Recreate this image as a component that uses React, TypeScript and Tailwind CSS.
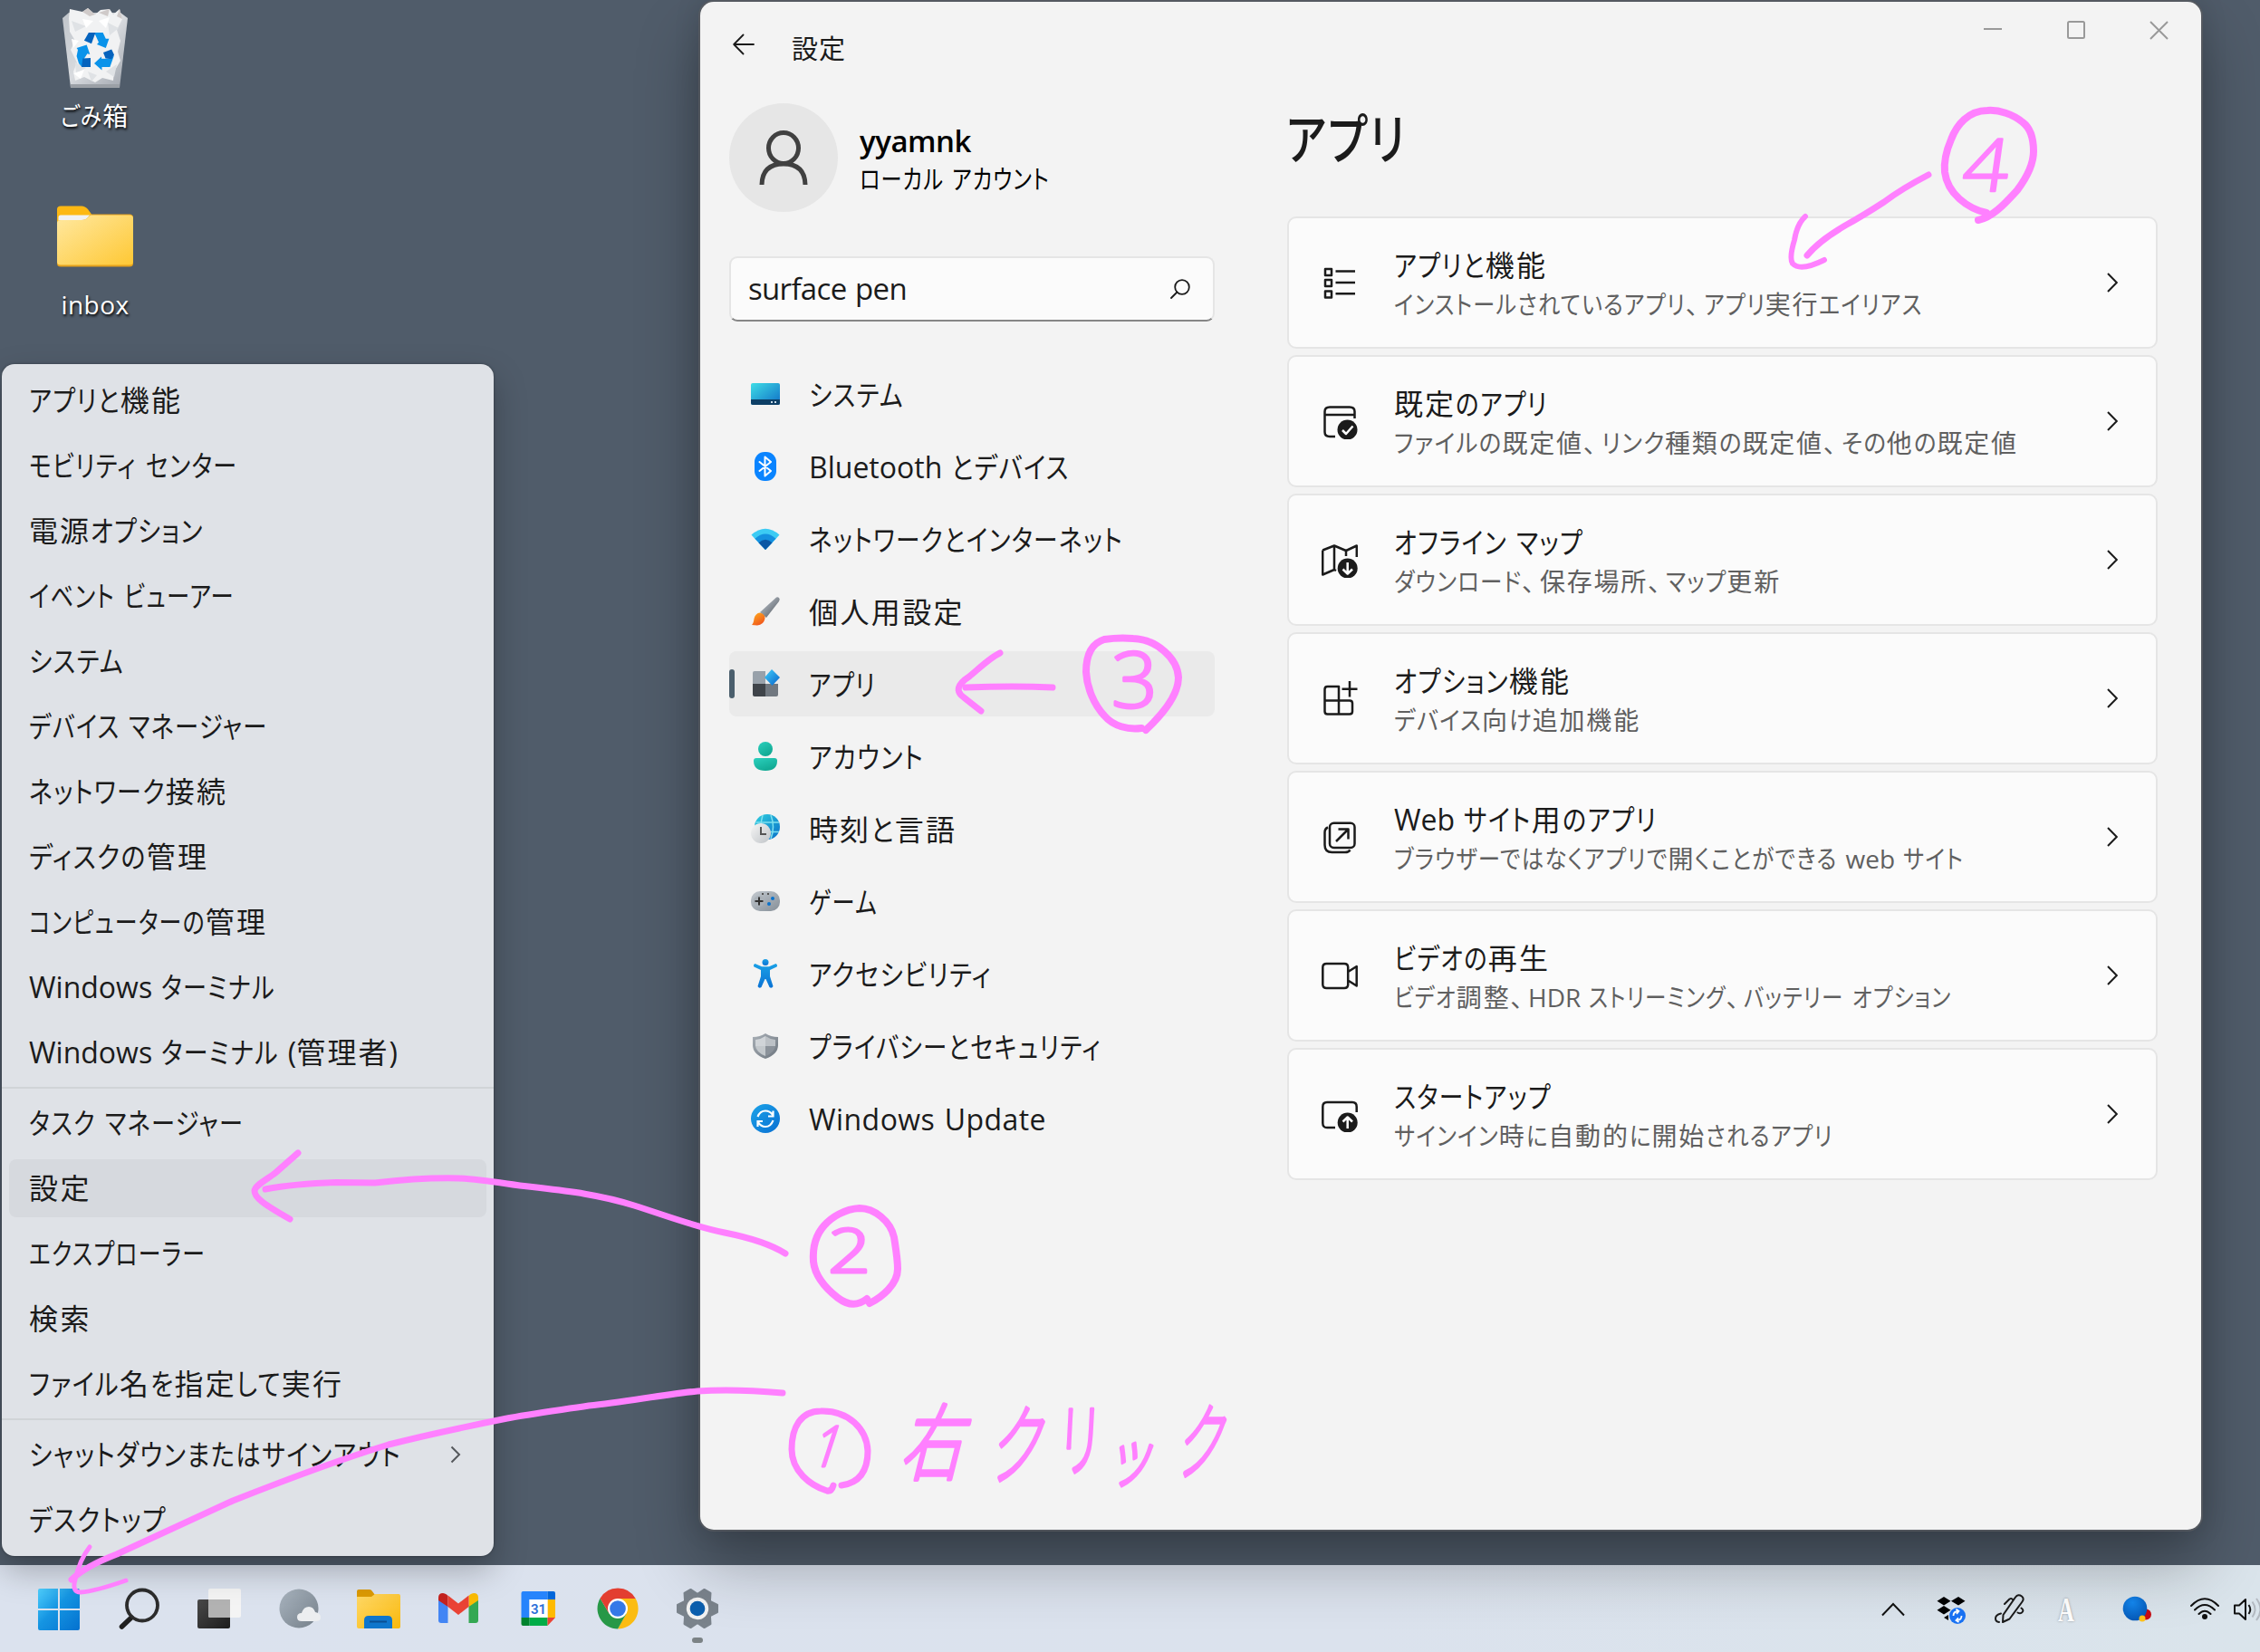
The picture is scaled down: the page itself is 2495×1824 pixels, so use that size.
import React, { useLayoutEffect, useRef, useState } from "react";

const KANJI = /[一-龯々]/;
const KANA = /[ぁ-ゖァ-ヺー]/;

/*
 * Single line of mixed text that fills a given width. Kana runs are condensed
 * to the space left over by kanji, Latin words and punctuation; a line that has
 * no kana is fitted through its tracking instead.
 */
function T({ w, children }: { w: number; children: string }) {
  const ref = useRef<HTMLSpanElement>(null);
  const [fit, setFit] = useState<{ k: number; widths: number[]; ls: number } | null>(null);
  const runs = children.match(/[一-龯々]+|[ぁ-ゖァ-ヺー]+|、|[^一-龯々ぁ-ゖァ-ヺー、]+/g) || [];
  const hasKana = KANA.test(children);
  useLayoutEffect(() => {
    if (!ref.current) return;
    const total = ref.current.getBoundingClientRect().width;
    const widths = Array.from(ref.current.children).map((c) => c.getBoundingClientRect().width);
    const kana = widths.reduce((s, v, i) => s + (KANA.test(runs[i]) ? v : 0), 0);
    setFit({
      k: kana ? (w - (total - kana)) / kana : 1,
      widths,
      ls: hasKana ? 0 : (w - total) / children.length,
    });
  }, []);
  return (
    <span ref={ref} className="inline-block whitespace-pre" style={{ letterSpacing: fit ? fit.ls : 0 }}>
      {runs.map((r, i) => {
        if (r === "、") {
          return (
            <span key={i} className="inline-block w-[0.7em]">
              {r}
            </span>
          );
        }
        if (KANA.test(r)) {
          return (
            <span
              key={i}
              className="inline-block origin-left whitespace-pre tracking-[0.05em]"
              style={fit ? { width: fit.widths[i] * fit.k, transform: `scaleX(${fit.k})` } : undefined}
            >
              {r}
            </span>
          );
        }
        return (
          <span key={i} className={KANJI.test(r) && hasKana ? "tracking-[0.065em]" : "[word-spacing:0.05em]"}>
            {r}
          </span>
        );
      })}
    </span>
  );
}

/* ---------- desktop icons ---------- */

function BinIcon() {
  return (
    <svg width="72" height="88" viewBox="0 0 72 88">
      <defs>
        <linearGradient id="bin" x1="0" y1="0" x2="1" y2="1">
          <stop offset="0" stopColor="#c9cdd2" />
          <stop offset="0.5" stopColor="#e4e6e9" />
          <stop offset="1" stopColor="#a4a9b1" />
        </linearGradient>
      </defs>
      <path d="M0 11 L7 5 H64 L72 11 L63 88 H9Z" fill="url(#bin)" opacity="0.92" />
      <path d="M7 11 L8 1 L22 4 L28 0 L36 7 L42 2 L52 1 L56 7 L63 1 L66 12 L60 24 L64 36 L61 48 L64 58 L57 70 L56 80 L44 77 L36 82 L24 76 L14 80 L12 70 L16 60 L9 46 L14 36 L8 26Z" fill="#f1f2f3" />
      <path d="M22 4 L28 0 L36 7 L30 9Z M40 5 L52 1 L50 9Z M60 9 L63 1 L66 12Z" fill="#cfcac9" />
      <path d="M10 14 L26 20 L14 26Z M50 16 L62 22 L52 30Z M14 60 L26 66 L15 72Z M48 70 L60 62 L57 76Z M28 70 L38 74 L32 81Z" fill="#dfe2e5" />
      <path d="M12 72 L24 68 L20 78Z M40 14 L52 10 L48 22Z M22 12 L34 14 L26 22Z M10 34 L18 36 L12 44Z" fill="#fff" />
      <path d="M9 84 H63 V88 H9Z" fill="#9ba0a6" />
      <path d="M28.9 27 H44.6 L47.8 33.7 H51.4 L47.8 44 L38 40 L40 37.7 L36 29Z" fill="#0a93ea" />
      <path d="M23.9 35.7 L28.9 27 H36.4 L32 39.2Z" fill="#0563bd" />
      <path d="M15.6 44 L26.7 40.4 L30.3 51 L27.4 50.3 L23 57 L21.5 65 L18 61 L15.6 53 L17 46Z" fill="#0a93ea" />
      <path d="M22.4 55.5 L31 55 V65 H21Z" fill="#0563bd" />
      <path d="M35 61 L43 53.5 V55.8 L53 56 L57 52 L52.4 65 H43.5 V68.5Z" fill="#0a93ea" />
      <path d="M45 49 L54.2 45.6 L57 51.5 L54.2 56.2 L47.5 55.5Z" fill="#0563bd" />
    </svg>
  );
}

function DesktopFolder() {
  return (
    <svg width="84" height="68" viewBox="0 0 84 68">
      <defs>
        <linearGradient id="dfold" x1="0" y1="0" x2="1" y2="1">
          <stop offset="0" stopColor="#ffe8a0" />
          <stop offset="1" stopColor="#fec834" />
        </linearGradient>
      </defs>
      <path d="M0 18 V4 Q0 0.5 4 0.5 H27 Q31 0.5 34 4 L38 9.5 V18Z" fill="#fdb813" />
      <path d="M1.5 18 V13 Q1.5 10.5 4 10.5 H37 L30 18Z" fill="#f1f1f2" />
      <path d="M0 64 V19 Q0 16 4 16 H27 Q32 16 34 13 L37 9.5 H80 Q84 9.5 84 13 V64 Q84 67.5 80 67.5 H4 Q0 67.5 0 64Z" fill="#e5a21c" />
      <path d="M0 62 V19 Q0 16 4 16 H27 Q32 16 34 13 L37 10.5 H80 Q84 10.5 84 14 V62 Q84 65.5 80 65.5 H4 Q0 65.5 0 62Z" fill="url(#dfold)" />
    </svg>
  );
}

/* ---------- navigation icons ---------- */

const navIcons: Record<string, React.ReactNode> = {
  system: (
    <>
      <defs>
        <linearGradient id="sys" x1="0" y1="0" x2="1" y2="1">
          <stop offset="0" stopColor="#3fdde6" />
          <stop offset="1" stopColor="#0f6fc6" />
        </linearGradient>
      </defs>
      <rect x="0" y="4" width="32" height="24" rx="2" fill="url(#sys)" />
      <path d="M0 22 H32 V26 Q32 28 30 28 H2 Q0 28 0 26Z" fill="#0d3f66" />
      <path d="M22 24h2v2h-2zM26 24h2v2h-2z" fill="#c7d9e6" />
    </>
  ),
  bluetooth: (
    <>
      <rect x="4" y="0" width="24" height="32" rx="11" fill="#0a84ff" />
      <path d="M9.5 11 L22 21 L15.5 26.5 V5.5 L22 11 L9.5 21" fill="none" stroke="#fff" strokeWidth="2" strokeLinejoin="round" strokeLinecap="round" />
    </>
  ),
  network: (
    <>
      <path d="M0.5 11.5 Q16 -2 31.5 11.5 L27.5 16 L16 28 L4.5 16Z" fill="#3ccbf4" />
      <path d="M4.5 15.8 Q16 5 27.5 15.8 L16 28Z" fill="#1490df" />
      <path d="M8.5 20.3 Q16 13 23.5 20.3 L16 28Z" fill="#0b57a4" />
    </>
  ),
  brush: (
    <>
      <defs>
        <linearGradient id="hand" x1="0" y1="0" x2="1" y2="1">
          <stop offset="0.2" stopColor="#b0b7bf" />
          <stop offset="0.8" stopColor="#636a72" />
        </linearGradient>
        <linearGradient id="tip" x1="0" y1="0" x2="0.6" y2="1">
          <stop offset="0" stopColor="#ffb01e" />
          <stop offset="1" stopColor="#f0561d" />
        </linearGradient>
      </defs>
      <path d="M10 17 L27 1.5 Q29 -0.5 31 1 Q32.500 2.500 31 5 L17 23Z" fill="url(#hand)" />
      <path d="M1 31 Q3 29 3.500 24 Q5 18 10 17.500 Q16 19 15.500 24 Q14 31 7 31.500 Z" fill="url(#tip)" />
    </>
  ),
  apps: (
    <>
      <defs>
        <linearGradient id="dia" x1="0" y1="0" x2="1" y2="1">
          <stop offset="0.1" stopColor="#3dc4f5" />
          <stop offset="0.9" stopColor="#0a6dd0" />
        </linearGradient>
      </defs>
      <path d="M4 2 H16 V16 H2 V4 Q2 2 4 2Z" fill="#98a1aa" />
      <path d="M2 16 H16 V30 H4 Q2 30 2 28Z" fill="#3f444a" />
      <path d="M16 16 H30 V28 Q30 30 28 30 H16Z" fill="#717880" />
      <path d="M23 0 L32 9 L23.500 18 L15 9Z" fill="url(#dia)" />
    </>
  ),
  account: (
    <>
      <defs>
        <linearGradient id="acc" x1="0" y1="0" x2="0.6" y2="1">
          <stop offset="0" stopColor="#2bd0bd" />
          <stop offset="1" stopColor="#10a892" />
        </linearGradient>
      </defs>
      <circle cx="16" cy="8" r="8" fill="url(#acc)" />
      <path d="M3 21 Q3 18 6 18 H26 Q29 18 29 21 Q29 32 16 32 Q3 32 3 21Z" fill="url(#acc)" />
    </>
  ),
  time: (
    <>
      <defs>
        <linearGradient id="glb" x1="0" y1="0" x2="1" y2="1">
          <stop offset="0" stopColor="#2ed0df" />
          <stop offset="1" stopColor="#0a6fc8" />
        </linearGradient>
        <linearGradient id="clk" x1="0" y1="0" x2="1" y2="1">
          <stop offset="0" stopColor="#f6f6f6" />
          <stop offset="1" stopColor="#bfc3c7" />
        </linearGradient>
      </defs>
      <circle cx="18" cy="14" r="14" fill="url(#glb)" />
      <path d="M5.500 9 H31 M8 19.500 H31 M13 1 Q9 14 13 27 M22 1 Q27 14 22 27" fill="none" stroke="#7fe0ef" strokeWidth="1.500" />
      <circle cx="11" cy="21" r="11" fill="url(#clk)" />
      <path d="M11 14 V22 H17" fill="none" stroke="#555" strokeWidth="2" />
    </>
  ),
  game: (
    <>
      <defs>
        <linearGradient id="gm" x1="0" y1="0" x2="1" y2="1">
          <stop offset="0" stopColor="#c3c9cf" />
          <stop offset="1" stopColor="#868f98" />
        </linearGradient>
      </defs>
      <rect x="0" y="5" width="32" height="22" rx="10" fill="url(#gm)" />
      <circle cx="9" cy="16" r="6" fill="#aab1b8" />
      <path d="M9 11.500 V20.500 M4.500 16 H13.500" stroke="#333" strokeWidth="2" />
      <circle cx="24" cy="13" r="2" fill="#0a72cc" />
      <circle cx="20" cy="19" r="2" fill="#0a72cc" />
      <path d="M12 7h2v2h-2zM18 7h2v2h-2z" fill="#555" />
    </>
  ),
  access: (
    <>
      <defs>
        <linearGradient id="man" x1="0" y1="0" x2="0" y2="1">
          <stop offset="0" stopColor="#1aa0e6" />
          <stop offset="1" stopColor="#0a72d4" />
        </linearGradient>
      </defs>
      <circle cx="16" cy="3.500" r="3.500" fill="url(#man)" />
      <path d="M4.500 5 L12 8.300 H20 L27.500 5 Q30 6.500 28.500 8.500 L21 12 V19 L24.500 30 Q23 33 20.500 31 L16.500 22 H15.500 L11.500 31 Q9 33 7.500 30 L11 19 V12 L3.500 8.500 Q2 6.500 4.500 5Z" fill="url(#man)" />
    </>
  ),
  shield: (
    <>
      <defs>
        <linearGradient id="shd" x1="0" y1="0" x2="1" y2="1">
          <stop offset="0" stopColor="#a9b0b7" />
          <stop offset="1" stopColor="#6d757e" />
        </linearGradient>
      </defs>
      <path d="M16 2 Q22 6 30 6 V15 Q30 25 16 30 Q2 25 2 15 V6 Q10 6 16 2Z" fill="url(#shd)" />
      <path d="M16 5 V16 H5 V9 Q11 8.500 16 5Z" fill="#d0d4d8" />
      <path d="M16 5 V16 H27 V9 Q21 8.500 16 5Z" fill="#bcc1c6" />
      <path d="M16 16 H27 Q26 23 16 27Z" fill="#8b929a" />
      <path d="M16 16 H5 Q6 23 16 27Z" fill="#c3c8cc" />
    </>
  ),
  update: (
    <>
      <defs>
        <linearGradient id="upd" x1="0" y1="0" x2="1" y2="1">
          <stop offset="0" stopColor="#1ba3e8" />
          <stop offset="1" stopColor="#0a6fd2" />
        </linearGradient>
      </defs>
      <circle cx="16" cy="16" r="16" fill="url(#upd)" />
      <path d="M7.500 14 Q10 7.500 16 7.500 Q21 7.500 24 12 M24.500 7.500 V13.500 H19 M24.500 18 Q22 25 16 25 Q11 25 8 20 M7.500 25 V19 H13" fill="none" stroke="#fff" strokeWidth="2.200" />
    </>
  ),
};

const nav: { icon: string; label: string; w: number }[] = [
  { icon: "system", label: "システム", w: 105 },
  { icon: "bluetooth", label: "Bluetooth とデバイス", w: 288 },
  { icon: "network", label: "ネットワークとインターネット", w: 347 },
  { icon: "brush", label: "個人用設定", w: 172 },
  { icon: "apps", label: "アプリ", w: 74 },
  { icon: "account", label: "アカウント", w: 127 },
  { icon: "time", label: "時刻と言語", w: 163 },
  { icon: "game", label: "ゲーム", w: 76 },
  { icon: "access", label: "アクセシビリティ", w: 202 },
  { icon: "shield", label: "プライバシーとセキュリティ", w: 323 },
  { icon: "update", label: "Windows Update", w: 262 },
];

/* ---------- settings cards ---------- */

const cardIcons: Record<string, React.ReactNode> = {
  list: (
    <path d="M4 5h7v7H4zM4 17h7v7H4zM4 29.500h7v7H4zM15.500 7.500H37M15.500 20H37M15.500 32.300H37" />
  ),
  defaults: (
    <>
      <path d="M15 37 H9 Q3.500 37 3.500 32 V9.500 Q3.500 4.500 9 4.500 H31 Q36.500 4.500 36.500 9.500 V17 M3.500 13 H36.500" />
      <circle cx="28.500" cy="29.500" r="11" fill="#1b1b1b" stroke="none" />
      <path d="M23 30 L27 34 L34.500 25.500" stroke="#fff" />
    </>
  ),
  map: (
    <>
      <path d="M1.200 9.500 L14 4.500 L27 10 L38.800 4.500 V17 M1.200 9.500 V36.500 L14 31 V4.500 M14 31 L16 32 M27 10 V16" />
      <circle cx="28.700" cy="29.500" r="11" fill="#1b1b1b" stroke="none" />
      <path d="M28.700 23 V35 M23.500 30.500 L28.700 35.500 L34 30.500" stroke="#fff" />
    </>
  ),
  optional: (
    <path d="M3.500 10 Q3.500 7 6.500 7 H19 V37.500 M3.500 10 V34.500 Q3.500 37.500 6.500 37.500 H31 Q34 37.500 34 34.500 V25.500 Q34 22.500 31 22.500 H3.500 M31 1 V18.500 M22.500 9.700 H39.500" />
  ),
  web: (
    <>
      <rect x="9" y="4.700" width="27.500" height="27.300" rx="4.500" />
      <path d="M7 9.500 Q3.500 11 3.500 15 V29 Q3.500 37 11.500 37 H26 Q30 37 31.500 34.500 M16 25 L29 12 M18.500 11.500 H29.500 V22.500" />
    </>
  ),
  video: (
    <path d="M5.500 7 H25 Q29.200 7 29.200 11 V30 Q29.200 34 25 34 H5.500 Q1.300 34 1.300 30 V11 Q1.300 7 5.500 7Z M29.200 16 L38.700 10 V31.500 L29.200 25.500" />
  ),
  startup: (
    <>
      <path d="M15 35 H6 Q1.300 35 1.300 30 V12 Q1.300 7 6 7 H34 Q38.700 7 38.700 12 V18" />
      <circle cx="28.700" cy="29.500" r="11" fill="#1b1b1b" stroke="none" />
      <path d="M28.700 36 V24 M23.500 28.500 L28.700 23.500 L34 28.500" stroke="#fff" />
    </>
  ),
};

const cards: { icon: string; title: string; tw: number; sub: string; sw: number }[] = [
  { icon: "list", title: "アプリと機能", tw: 169, sub: "インストールされているアプリ、アプリ実行エイリアス", sw: 584 },
  { icon: "defaults", title: "既定のアプリ", tw: 170, sub: "ファイルの既定値、リンク種類の既定値、その他の既定値", sw: 689 },
  { icon: "map", title: "オフライン マップ", tw: 209, sub: "ダウンロード、保存場所、マップ更新", sw: 427 },
  { icon: "optional", title: "オプション機能", tw: 195, sub: "デバイス向け追加機能", sw: 272 },
  { icon: "web", title: "Web サイト用のアプリ", tw: 290, sub: "ブラウザーではなくアプリで開くことができる web サイト", sw: 629 },
  { icon: "video", title: "ビデオの再生", tw: 172, sub: "ビデオ調整、HDR ストリーミング、バッテリー オプション", sw: 615 },
  { icon: "startup", title: "スタートアップ", tw: 174, sub: "サインイン時に自動的に開始されるアプリ", sw: 485 },
];

/* ---------- context menu ---------- */

const menu: { label: string; w: number; active?: boolean; more?: boolean }[][] = [
  [
    { label: "アプリと機能", w: 169 },
    { label: "モビリティ センター", w: 230 },
    { label: "電源オプション", w: 193 },
    { label: "イベント ビューアー", w: 227 },
    { label: "システム", w: 105 },
    { label: "デバイス マネージャー", w: 264 },
    { label: "ネットワーク接続", w: 219 },
    { label: "ディスクの管理", w: 198 },
    { label: "コンピューターの管理", w: 263 },
    { label: "Windows ターミナル", w: 272 },
    { label: "Windows ターミナル (管理者)", w: 407 },
  ],
  [
    { label: "タスク マネージャー", w: 237 },
    { label: "設定", w: 69, active: true },
    { label: "エクスプローラー", w: 195 },
    { label: "検索", w: 69 },
    { label: "ファイル名を指定して実行", w: 347 },
  ],
  [
    { label: "シャットダウンまたはサインアウト", w: 411, more: true },
    { label: "デスクトップ", w: 152 },
  ],
];

function ContextMenu() {
  return (
    <div className="absolute left-[2px] top-[402px] w-[543px] h-[1316px] rounded-[14px] bg-[#dfe2e7] py-1 shadow-[0_16px_36px_rgba(0,0,0,0.26),0_0_3px_rgba(0,0,0,0.35)] text-[32px] text-[#1b1b1b]">
      {menu.map((group, g) => (
        <div key={g}>
          {g > 0 && <div className="h-[6px] pt-[2px]"><div className="h-[2px] bg-[#d0d4d7]" /></div>}
          {group.map((m) => (
            <div key={m.label} className="h-[72px] py-1 px-2">
              <div className={"flex h-[64px] items-center justify-between rounded-[8px] pl-[22px] pr-[28px] " + (m.active ? "bg-[#d6d9de]" : "")}>
                <T w={m.w}>{m.label}</T>
                {m.more && (
                  <svg width="12" height="20" viewBox="0 0 12 20" fill="none" stroke="#55585c" strokeWidth="2">
                    <path d="M1.500 1.500 L10 10 L1.500 18.500" />
                  </svg>
                )}
              </div>
            </div>
          ))}
        </div>
      ))}
    </div>
  );
}

/* ---------- settings window ---------- */

function SettingsWindow() {
  return (
    <div className="absolute left-[773px] top-[2px] flex w-[1657px] h-[1687px] rounded-[15px] bg-[#f3f3f3] shadow-[0_0_0_2px_rgba(90,92,98,0.75),0_36px_70px_rgba(0,0,0,0.3),0_0_30px_rgba(0,0,0,0.14)] text-[#1b1b1b]">
      <div className="flex w-[600px] flex-col pl-[32px]">
        <div className="flex h-[94px] items-center pl-[4px]">
          <svg width="24" height="24" viewBox="0 0 24 24" fill="none" stroke="#1b1b1b" strokeWidth="1.800" strokeLinejoin="round" strokeLinecap="round">
            <path d="M23 12 H1.500 M11.500 1.500 L1.200 12 L11.500 22.500" />
          </svg>
          <div className="ml-[41px] mt-[10px] text-[29px]"><T w={60}>設定</T></div>
        </div>
        <div className="mt-[18px] flex h-[120px] items-center">
          <div className="flex size-[120px] justify-center rounded-full bg-[#e6e6e6]">
            <svg width="56" height="62" viewBox="0 0 56 62" fill="none" stroke="#404040" strokeWidth="5" className="mt-[29px]">
              <ellipse cx="28" cy="20.500" rx="16.500" ry="17" />
              <path d="M4 61 Q4.500 38 28 38 Q51.500 38 52 61" />
            </svg>
          </div>
          <div className="ml-[24px] mt-[4px] flex flex-col text-black">
            <div className="h-[44px] text-[33px] font-semibold leading-[44px]"><T w={123}>yyamnk</T></div>
            <div className="h-[40px] text-[29px] leading-[40px]"><T w={210}>ローカル アカウント</T></div>
          </div>
        </div>
        <div className="mt-[49px] flex h-[72px] w-[536px] items-center justify-between rounded-[9px] border-2 border-[#e5e5e5] border-b-[#868686] bg-[#fbfbfb] pl-[19px] pr-[25px]">
          <div className="text-[33px] leading-[60px]"><T w={175}>surface pen</T></div>
          <svg width="22" height="22" viewBox="0 0 22 22" fill="none" stroke="#1b1b1b" strokeWidth="1.800" strokeLinecap="round">
            <circle cx="13" cy="9" r="7.800" />
            <path d="M7.500 14.500 L1 21" />
          </svg>
        </div>
        <div className="mt-[44px] flex w-[536px] flex-col gap-2">
          {nav.map((n) => (
            <div key={n.icon} className={"flex h-[72px] items-center rounded-[8px] " + (n.icon === "apps" ? "bg-[#eaeaea]" : "")}>
              <div className={"h-[32px] w-[6px] rounded-full " + (n.icon === "apps" ? "bg-[#4b5f6d]" : "")} />
              <svg width="32" height="32" viewBox="0 0 32 32" className="ml-[18px] overflow-visible">
                {navIcons[n.icon]}
              </svg>
              <div className="ml-[32px] mt-[2px] text-[32px]"><T w={n.w}>{n.label}</T></div>
            </div>
          ))}
        </div>
      </div>
      <div className="flex w-[1057px] flex-col pl-[48px]">
        <div className="flex h-[62px] justify-end pr-[36px] pt-[21px]">
          <svg width="204" height="22" viewBox="0 0 204 22" fill="none" stroke="#999" strokeWidth="2">
            <path d="M0 9 H20 M184 1 L203 20 M203 1 L184 20" />
            <rect x="93" y="1" width="18" height="18" rx="1.500" />
          </svg>
        </div>
        <div className="-ml-[1px] mt-[44px] h-[86px] text-[60px] font-medium leading-[90px]"><T w={133}>アプリ</T></div>
        <div className="mt-[45px] flex w-[961px] flex-col gap-[7px]">
          {cards.map((c) => (
            <div key={c.icon} className="flex h-[146px] items-center rounded-[10px] border-2 border-[#e5e5e5] bg-[#fbfbfb] pl-[36px] pr-[42px]">
              <svg width="40" height="40" viewBox="0 0 40 40" fill="none" stroke="#1b1b1b" strokeWidth="2.500" strokeLinejoin="round">
                {cardIcons[c.icon]}
              </svg>
              <div className="ml-[40px] mt-[3px] flex-1">
                <div className="h-[45px] text-[32px] leading-[45px]"><T w={c.tw}>{c.title}</T></div>
                <div className="h-[42px] text-[28px] leading-[42px] text-[#606060]"><T w={c.sw}>{c.sub}</T></div>
              </div>
              <svg width="12" height="22" viewBox="0 0 12 22" fill="none" stroke="#1b1b1b" strokeWidth="2">
                <path d="M1 1 L10.800 11 L1 21" />
              </svg>
            </div>
          ))}
        </div>
      </div>
    </div>
  );
}

/* ---------- taskbar ---------- */

const gearTeeth = [0, 60, 120, 180, 240, 300];

const appIcons: React.ReactNode[] = [
  <>
    <defs>
      <linearGradient id="win" x1="0" y1="0" x2="1" y2="1">
        <stop offset="0" stopColor="#4fd0ff" />
        <stop offset="0.45" stopColor="#1595e2" />
        <stop offset="1" stopColor="#0471cf" />
      </linearGradient>
    </defs>
    <path d="M2 1 H22 V23 H0 V3 Q0 1 2 1Z M24 1 H44 Q46 1 46 3 V23 H24Z M0 25 H22 V47 H2 Q0 47 0 45Z M24 25 H46 V45 Q46 47 44 47 H24Z" fill="url(#win)" />
  </>,
  <>
    <path d="M15 33 L4.500 43" stroke="#1f1f1f" strokeWidth="5.500" strokeLinecap="round" />
    <circle cx="27" cy="19.500" r="17" fill="none" stroke="#2c2c2c" strokeWidth="3.800" />
  </>,
  <>
    <defs>
      <linearGradient id="dk" x1="0" y1="0" x2="1" y2="1">
        <stop offset="0" stopColor="#4a4a4a" />
        <stop offset="1" stopColor="#1c1c1c" />
      </linearGradient>
    </defs>
    <rect x="0" y="13" width="36" height="32" rx="2" fill="url(#dk)" />
    <rect x="12" y="1" width="36" height="32" rx="2" fill="#f4f4f4" />
    <path d="M12 13 H36 V33 H14 Q12 33 12 31Z" fill="#b2b2b2" />
  </>,
  <>
    <defs>
      <linearGradient id="moon" x1="0" y1="0" x2="1" y2="1">
        <stop offset="0" stopColor="#aab5c0" />
        <stop offset="1" stopColor="#747f89" />
      </linearGradient>
    </defs>
    <circle cx="24" cy="23" r="21.500" fill="url(#moon)" />
    <path d="M27 37 Q22 37 22 32.500 Q22 28 27 28 Q29 21 35 21 Q40 21 42 27 Q48 28 48 33 Q48 37 43 37Z" fill="#eceef0" />
  </>,
  <>
    <defs>
      <linearGradient id="fd" x1="0" y1="0" x2="1" y2="1">
        <stop offset="0" stopColor="#ffd968" />
        <stop offset="1" stopColor="#f9b80c" />
      </linearGradient>
    </defs>
    <path d="M0 12 V4 Q0 2 2 2 H14 Q16 2 17 4 L20 8 V12Z" fill="#dc9a04" />
    <path d="M0 10 H16 L20 7 H46 Q48 7 48 9 V43 Q48 45 46 45 H2 Q0 45 0 43Z" fill="url(#fd)" />
    <path d="M8 45 V36 Q8 31 13 31 H34 Q39 31 39 36 V45Z" fill="#0f76cc" />
    <path d="M14 37.500 H33" stroke="#0a4f93" strokeWidth="2" />
  </>,
  <>
    <path d="M2 11 V36 Q2 39 5 39 H12.500 V19Z" fill="#4285f4" />
    <path d="M46 11 V36 Q46 39 43 39 H35.500 V19Z" fill="#34a853" />
    <path d="M2 11 Q2 6 7 6 Q9 6 11 7.500 L12.500 9 V21 L2 14Z" fill="#c5221f" />
    <path d="M46 11 Q46 6 41 6 Q39 6 37 7.500 L35.500 9 V21 L46 14Z" fill="#fbbc04" />
    <path d="M12.500 8.500 L24 17.500 L35.500 8.500 V21 L24 30 L12.500 21Z" fill="#ea4335" />
  </>,
  <>
    <path d="M7.500 4 H34.500 V13 H14.500 V33 H5.500 V6 Q5.500 4 7.500 4Z" fill="#2684fc" />
    <path d="M34.500 4 H41 Q43 4 43 6 V13 H34.500Z" fill="#0066da" />
    <path d="M34.500 13 H43 V33 H34.500Z" fill="#ffba00" />
    <path d="M14.500 33 H34.500 V42 H14.500Z" fill="#00ac47" />
    <path d="M5.500 33 H14.500 V42 H7.500 Q5.500 42 5.500 40Z" fill="#00832d" />
    <path d="M34.500 33 H43 L34.500 42Z" fill="#ea4335" />
    <rect x="14.500" y="13" width="20" height="20" fill="#fff" />
    <text x="24.500" y="28.500" textAnchor="middle" fontSize="15" fontWeight="600" fill="#2b6fd8" fontFamily="Roboto, sans-serif">31</text>
  </>,
  <>
    <path d="M24 23 L24 12 H43.700 A22.500 22.500 0 0 1 24 45.500 L33.500 28Z" fill="#fbbc12" />
    <path d="M4.500 11.800 A22.500 22.500 0 0 0 24 45.500 L33.500 28.500 L24 23 L14.500 28.500Z" fill="#279847" />
    <path d="M24 12 H43.700 A22.500 22.500 0 0 0 4.500 11.800 L14.500 28.500 Z" fill="#e33e30" />
    <circle cx="24" cy="23" r="11" fill="#fff" />
    <circle cx="24" cy="23" r="8.800" fill="#3579e8" />
  </>,
  <>
    <g fill="#7a838c" stroke="#7a838c" strokeWidth="2" strokeLinejoin="round">
      {gearTeeth.map((a) => (
        <path key={a} d="M16 9 L20 1 H28 L32 9 L24 23Z" transform={`rotate(${a + 30} 24 23)`} />
      ))}
    </g>
    <circle cx="24" cy="23" r="17" fill="#7a838c" />
    <circle cx="24" cy="23" r="12.200" fill="#f2f2f2" />
    <circle cx="24" cy="23" r="8.300" fill="#0c5fae" />
  </>,
];

function Taskbar() {
  return (
    <div className="absolute bottom-0 left-0 flex h-[96px] w-[2495px] items-start justify-between bg-[linear-gradient(90deg,#dbe2ee,#dbe2ed_60%,#dae4eb)]">
      <div className="flex gap-[40px] pl-[42px] pt-[25px]">
        {appIcons.map((icon, i) => (
          <div key={i} className="flex w-[48px] flex-col items-center">
            <svg width="48" height="48" viewBox="0 0 48 48" className="overflow-visible">{icon}</svg>
            {i === 8 && <div className="mt-[7px] h-[6px] w-[12px] rounded-full bg-[#7b8285]" />}
          </div>
        ))}
      </div>
      <div className="flex w-[418px] items-center pt-[32px]">
        <svg width="26" height="32" viewBox="0 0 26 32" fill="none" stroke="#111" strokeWidth="2">
          <path d="M1 22.500 L13 10 L25 22.500" />
        </svg>
        <svg width="32" height="32" viewBox="0 0 32 32" className="ml-[35px]">
          <path d="M8 2 L15.500 6.800 L8 11.500 L0.500 6.800Z M24 2 L31.500 6.800 L24 11.500 L16 6.800Z M8 12 L15.500 16.800 L8 21.500 L0.500 16.800Z M8 25 L13 22 V28Z" fill="#000" />
          <circle cx="23" cy="23" r="9" fill="#1a73f5" />
          <path d="M18.500 23 Q18.500 18.500 23 18 M21.500 15.800 L24.500 18 L22 20.800 M27.500 23 Q27.500 27.500 23 28 M24.500 30 L21.500 28 L24 25.300" fill="none" stroke="#fff" strokeWidth="1.800" />
        </svg>
        <svg width="33" height="33" viewBox="0 0 33 33" fill="none" stroke="#1b1b1b" strokeWidth="2" className="ml-[32px]" strokeLinecap="round" strokeLinejoin="round">
          <path d="M9 31 L9.500 23 L23 3.500 Q26 -0.500 30 2.500 Q33 5 30.500 8.500 L16.500 27.500 Z M7 21.500 Q1 23 1 27 Q1 30.500 5 31 M11 11 L16.500 5.500 Q19 4 20.500 7 M29.500 15.500 Q33 18 30 20.500 Q28 22 25.500 20.500" />
        </svg>
        <div className="ml-[30px] w-[32px] text-center font-['Liberation_Serif'] text-[38px] leading-[32px] text-white [text-shadow:0_0_3px_#8a8d92]"><div className="origin-center scale-x-[0.650] font-bold">A</div></div>
        <svg width="32" height="32" viewBox="0 0 32 32" className="ml-[46px]">
          <defs>
            <radialGradient id="ball" cx="0.400" cy="0.250" r="0.800">
              <stop offset="0" stopColor="#1488f0" />
              <stop offset="1" stopColor="#0456b4" />
            </radialGradient>
          </defs>
          <circle cx="26" cy="21.500" r="6" fill="#c70b12" />
          <circle cx="14" cy="15" r="13.300" fill="url(#ball)" />
          <circle cx="22" cy="26" r="3.500" fill="#ffc21a" />
        </svg>
        <svg width="32" height="32" viewBox="0 0 32 32" fill="none" stroke="#111" strokeWidth="2" className="ml-[43px]" strokeLinecap="round">
          <path d="M1 12 Q16 -3.500 31 12 M5 16.500 Q16 5.500 27 16.500 M9.500 21 Q16 14.500 22.500 21" />
          <circle cx="16" cy="24" r="3" fill="#111" stroke="none" />
        </svg>
        <svg width="29" height="32" viewBox="0 0 29 32" fill="none" stroke="#111" strokeWidth="2" className="ml-[16px]" strokeLinejoin="round">
          <path d="M1 11.500 H6 L13 5 V27 L6 20.500 H1Z M16.500 11 Q20 16 16.500 21" />
          <path d="M20.500 7.500 Q26.500 16 20.500 24.500 M25 4 Q34 16 25 28" stroke="#b3b9c0" />
        </svg>
      </div>
    </div>
  );
}

/* ---------- pen annotations ---------- */

function Annotations() {
  return (
    <svg width="2495" height="1824" viewBox="0 0 2495 1824" className="pointer-events-none absolute left-0 top-0" fill="none" stroke="#ff80ff" strokeWidth="8" strokeLinecap="round" strokeLinejoin="round">
      <path strokeWidth="7" d="M929 1640 Q958 1636 958 1602 C957 1578 937 1557 906 1558 C884 1558 874 1576 874 1600 C874 1624 894 1640 913 1646 Q918 1647 920 1640" />
      <path d="M960 1439 C974 1432 991 1418 991 1401 C991 1390 989 1379 987 1366 C983 1348 965 1334 949 1334 C932 1335 918 1344 910 1353 C900 1364 897 1378 898 1393 C900 1411 916 1426 925 1433 Q942 1446 957 1434" />
      <path d="M1265 806 C1282 790 1301 768 1301 748 C1300 727 1277 706 1251 705 C1239 704 1226 705 1219 706 C1203 711 1199 727 1199 742 C1200 760 1208 778 1219 790 C1229 802 1246 806 1260 804" />
      <path d="M2184 243 C2200 240 2214 224 2227 210 C2236 198 2245 183 2245 167 C2245 150 2241 141 2233 135 C2222 126 2207 121 2194 122 C2173 122 2160 138 2154 154 C2148 168 2146 180 2147 190 C2150 214 2172 230 2193 235" />
      <g strokeWidth="7">
        <path d="M293 1313 Q325 1307 371 1305.500 L414 1306 Q465 1300 507 1301 Q525 1302 560 1307 C600 1313 650 1315 700 1331 C735 1342 765 1354 800 1361 Q845 1370 867 1384" />
        <path d="M329 1273 L304 1295 C295 1302 281 1309 281 1315 C281 1322 290 1329 320 1346" />
        <path d="M864 1538 C830 1535 800 1534 770 1536 C730 1540 690 1548 650 1552 C610 1558 580 1562 560 1566 Q480 1582 429 1595 C370 1613 310 1636 257 1657 L129 1716 Q95 1729 79 1744" />
        <path strokeWidth="5" d="M99 1708 Q88 1722 83 1744 Q79 1758 89 1758 Q105 1757 139 1745" />
        <path d="M1162 759 Q1120 757 1066 759" />
        <path d="M1104 721 C1093 726 1081 738 1070 747 Q1050 760 1064 770 Q1074 778 1083 785" />
        <path d="M2129 193 Q2100 208 2080 223 C2060 236 2048 243 2037 249 Q2008 266 1995 282" />
        <path strokeWidth="6" d="M1993 239 Q1984 247 1981 265 Q1975 285 1979 291 Q1988 300 2014 287" />
      </g>
      <g fill="#ff80ff" fontFamily="'Open Sans', sans-serif" fontWeight="300" strokeWidth="3">
        <text fontSize="62" transform="translate(893 1619) skewX(-18) scale(0.850 1)">1</text>
        <text fontSize="66" transform="translate(914 1405) scale(1.250 1)">2</text>
        <text fontSize="84" transform="translate(1227 781) scale(1.060 1)">3</text>
        <text fontSize="80" transform="translate(2164 211) skewX(-8) scale(1.100 1)" strokeWidth="2.500">4</text>
      </g>
      <g fill="#ff80ff" fontFamily="'Noto Sans CJK JP', sans-serif" strokeWidth="4" fontWeight="300">
        <text fontSize="92" transform="translate(993 1627) skewX(-14) scale(0.740 1)">右</text>
        <text fontSize="98" transform="translate(1091 1632) skewX(-12) scale(0.600 1)">ク</text>
        <text fontSize="90" transform="translate(1169 1623) skewX(-3) scale(0.560 1)">リ</text>
        <text fontSize="84" transform="translate(1226 1636) skewX(-10) scale(0.650 0.900)">ッ</text>
        <text fontSize="94" transform="translate(1297 1627) skewX(-12) scale(0.560 1)">ク</text>
      </g>
    </svg>
  );
}

export default function App() {
  return (
    <div className="relative h-[1824px] w-[2495px] overflow-hidden bg-[#505c6a] font-['Open_Sans','Noto_Sans_CJK_JP',sans-serif] [font-feature-settings:'palt']">
      <div className="flex w-[210px] flex-col items-center pt-[9px] text-[28px] text-white [text-shadow:1px_2px_3px_#000]">
        <BinIcon />
        <div className="mt-[9px] h-[44px] leading-[44px]"><T w={76}>ごみ箱</T></div>
        <div className="mt-[77px] flex flex-col items-center">
          <DesktopFolder />
          <div className="mt-[19px] h-[44px] leading-[44px]"><T w={75}>inbox</T></div>
        </div>
      </div>
      <Taskbar />
      <SettingsWindow />
      <ContextMenu />
      <Annotations />
    </div>
  );
}
